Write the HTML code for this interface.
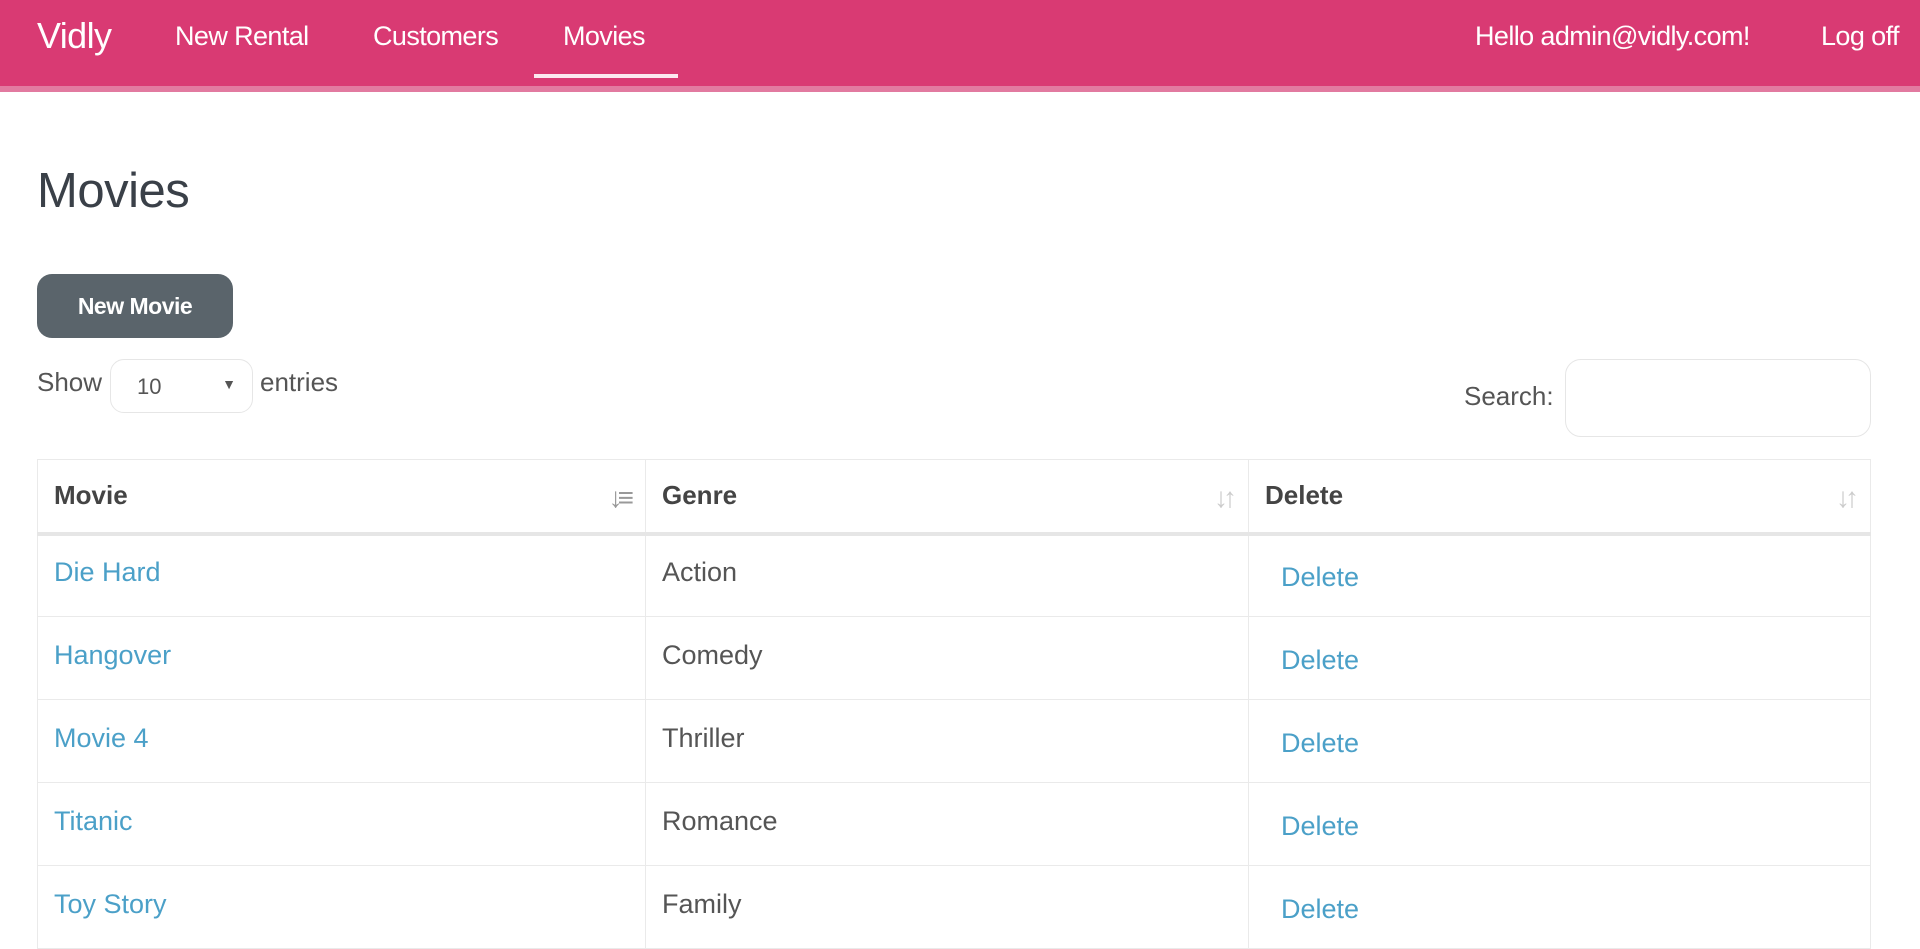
<!DOCTYPE html>
<html><head><meta charset="utf-8"><style>
*{box-sizing:border-box;margin:0;padding:0}
body{width:1920px;height:930px;overflow:hidden;background:#fff;font-family:"Liberation Sans",sans-serif;color:#555}
.nav{position:absolute;left:0;top:0;width:1920px;background:#d93a73;border-bottom:6px solid #e27aa0;height:92px}
.nav span{position:absolute;color:#fff;font-size:27px;top:21px;letter-spacing:-0.6px}
.nav .brand{font-size:36px;top:15px;left:37px}
.ul{position:absolute;left:534px;top:74px;width:144px;height:4px;background:#fce8f0}
h1{position:absolute;left:37px;top:163px;font-size:49px;font-weight:normal;color:#3a4048;letter-spacing:-0.5px}
.btn{position:absolute;left:37px;top:274px;width:196px;height:64px;border-radius:15px;background:#5a646b;color:#fff;font-weight:bold;font-size:23px;text-align:center;line-height:64px;letter-spacing:-0.5px}
.lbl{position:absolute;font-size:26px;color:#555}
.sel{position:absolute;left:110px;top:359px;width:143px;height:54px;border:1px solid #e6e6e6;border-radius:14px;font-size:22px;padding:14px 26px;color:#555}
.sel i{position:absolute;right:16px;top:16px;font-style:normal;font-size:14px}
.srch{position:absolute;left:1565px;top:359px;width:306px;height:78px;border:1px solid #e6e6e6;border-radius:16px}
table{position:absolute;left:37px;top:459px;width:1834px;border-collapse:collapse}
td,th{border:1px solid #eaeaea;text-align:left;font-size:27px;height:83px;padding:0 16px;vertical-align:middle;position:relative}
td{padding-bottom:6px}
th{height:74px;font-weight:bold;color:#444;border-bottom:4px solid #e6e6e6;font-size:26px;padding-bottom:0}
th i{position:absolute;right:16px;top:22px;font-style:normal;color:#ccc;font-size:28px;letter-spacing:-5px}
a{color:#4ba0c8;text-decoration:none}
td.d a{padding-left:16px;position:relative;top:5px}
</style></head><body>
<div class="nav">
<span class="brand">Vidly</span>
<span style="left:175px">New Rental</span>
<span style="left:373px">Customers</span>
<span style="left:563px">Movies</span>
<span style="left:1475px">Hello admin@vidly.com!</span>
<span style="left:1821px">Log off</span>
<div class="ul"></div>
</div>
<h1>Movies</h1>
<div class="btn">New Movie</div>
<div class="lbl" style="left:37px;top:367px">Show</div>
<div class="sel">10<i>▼</i></div>
<div class="lbl" style="left:260px;top:367px">entries</div>
<div class="lbl" style="left:1464px;top:381px">Search:</div>
<div class="srch"></div>
<table>
<tr><th style="width:608px">Movie<i style="color:#999">↓≡</i></th><th style="width:603px">Genre<i>↓↑</i></th><th>Delete<i>↓↑</i></th></tr>
<tr><td><a>Die Hard</a></td><td>Action</td><td class="d"><a>Delete</a></td></tr>
<tr><td><a>Hangover</a></td><td>Comedy</td><td class="d"><a>Delete</a></td></tr>
<tr><td><a>Movie 4</a></td><td>Thriller</td><td class="d"><a>Delete</a></td></tr>
<tr><td><a>Titanic</a></td><td>Romance</td><td class="d"><a>Delete</a></td></tr>
<tr><td><a>Toy Story</a></td><td>Family</td><td class="d"><a>Delete</a></td></tr>
</table>
</body></html>
